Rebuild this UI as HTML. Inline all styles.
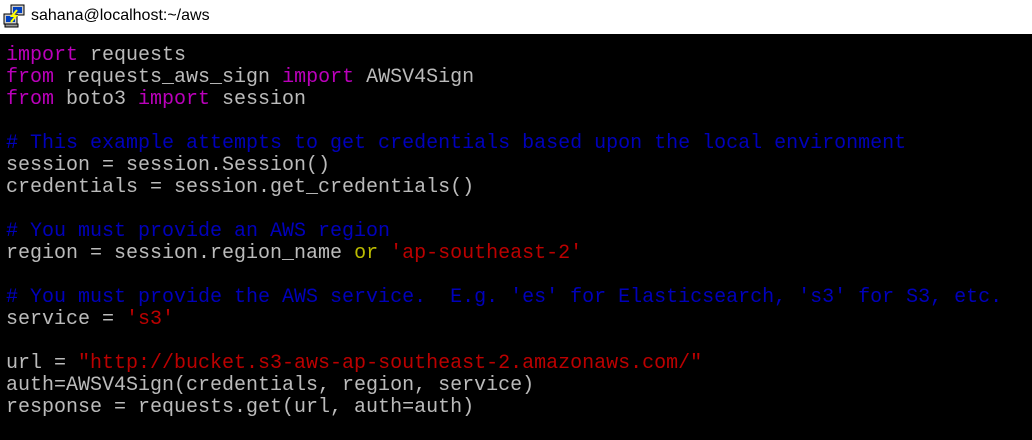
<!DOCTYPE html>
<html><head><style>
body{margin:0;width:1032px;height:440px;overflow:hidden;background:#000;}
.tb{position:absolute;left:0;top:0;width:1032px;height:34px;background:#fff;}
.tb span{position:absolute;left:31px;top:7px;font:16px "Liberation Sans",sans-serif;color:#000;}
pre{position:absolute;left:6px;top:45px;margin:0;font:20px/22px "Liberation Mono",monospace;color:#bbb;}
.k{color:#b0b}.c{color:#00b}.s{color:#b00}.o{color:#bb0}
</style></head><body>
<div class="tb">
<svg width="24" height="24" viewBox="0 0 24 24" style="position:absolute;left:3px;top:4px">
<rect x="8" y="1" width="13" height="10" fill="#ccc" stroke="#000"/><rect x="10" y="3" width="9" height="6" fill="#0040c0"/>
<rect x="1" y="10" width="13" height="10" fill="#ccc" stroke="#000"/><rect x="3" y="12" width="9" height="6" fill="#0040c0"/>
<rect x="2" y="20" width="13" height="3" fill="#999" stroke="#000"/>
<path d="M14 6 L9 12 L13 12 L8 18" stroke="#ff0" stroke-width="2" fill="none"/>
</svg>
<span>sahana@localhost:~/aws</span></div>
<pre><span class="k">import</span> requests
<span class="k">from</span> requests_aws_sign <span class="k">import</span> AWSV4Sign
<span class="k">from</span> boto3 <span class="k">import</span> session

<span class="c"># This example attempts to get credentials based upon the local environment</span>
session = session.Session()
credentials = session.get_credentials()

<span class="c"># You must provide an AWS region</span>
region = session.region_name <span class="o">or</span> <span class="s">'ap-southeast-2'</span>

<span class="c"># You must provide the AWS service.  E.g. 'es' for Elasticsearch, 's3' for S3, etc.</span>
service = <span class="s">'s3'</span>

url = <span class="s">"http://bucket.s3-aws-ap-southeast-2.amazonaws.com/"</span>
auth=AWSV4Sign(credentials, region, service)
response = requests.get(url, auth=auth)
</pre>
</body></html>
